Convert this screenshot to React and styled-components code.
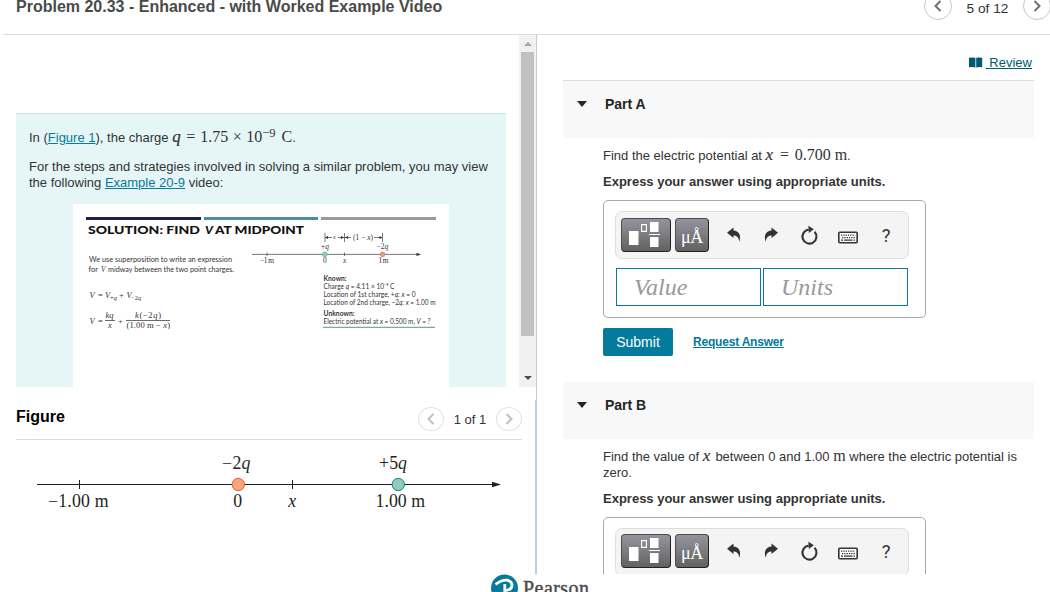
import React from 'react';
import styled, { createGlobalStyle } from 'styled-components';

const GlobalStyle = createGlobalStyle`
  * {
    box-sizing: border-box;
  }

  body {
    margin: 0;
    overflow: hidden;
    background: #fff;
    color: #252525;
    font-family: 'Liberation Sans', Arial, sans-serif;
    font-size: 13px;
    line-height: 16px;
  }

  p,
  h1,
  h2,
  h3 {
    margin: 0;
  }
`;

const StyledPage = styled.div`
  display: flex;
  flex-direction: column;
  width: 1050px;
  height: 592px;
  overflow: hidden;
`;
const StyledHeader = styled.header`
  display: flex;
  flex: none;
  justify-content: space-between;
  width: 1048px;
  height: 35px;
  margin-left: 3px;
  padding-left: 13px;
  border-bottom: 1px solid #dcdcdc;

  h1 {
    margin-top: -3px;
    color: #4a4a4a;
    font-size: 16px;
    line-height: 20px;
    white-space: nowrap;
  }
`;
const StyledPager = styled.div`
  display: flex;
  align-items: flex-start;
  margin-top: ${({ $top }) => $top || 0}px;

  span {
    width: ${({ $label }) => $label}px;
    padding-top: ${({ $drop }) => $drop}px;
    text-align: center;
    font-size: ${({ $size }) => $size}px;
    line-height: 16px;
    color: #333;
  }
`;
const StyledRound = styled.button`
  display: flex;
  flex: none;
  align-items: center;
  justify-content: center;
  width: ${({ $w }) => $w}px;
  height: ${({ $h }) => $h}px;
  padding: 0;
  border: 1px solid ${({ $faint }) => ($faint ? '#e2e2e2' : '#c7c7c7')};
  border-radius: 50%;
  background: #fff;
  color: ${({ $faint }) => ($faint ? '#c0c0c0' : '#6a7070')};
`;
const StyledMain = styled.main`
  display: flex;
  flex: none;
  height: 539px;
  overflow: hidden;
`;
const StyledLeft = styled.div`
  display: flex;
  flex-direction: column;
  flex: none;
  width: 537px;
`;
const StyledScrollPane = styled.div`
  display: flex;
  flex: none;
  height: 365px;
  border-right: 1px solid #b9cce0;
`;
const StyledIntroWrap = styled.div`
  flex: none;
  width: 519px;
  padding: 78px 13px 0 16px;
`;
const StyledIntro = styled.section`
  height: 274px;
  padding: 16px 0 0 13px;
  border-top: 1px solid #d5dede;
  background: #e6f6f7;
  white-space: nowrap;

  p {
    height: 16px;
    color: #333;
  }

  p + p {
    height: 32px;
    margin-top: 13px;
  }

  svg {
    display: block;
    margin: 13px 0 0 44px;
  }
`;
const StyledLink = styled.a`
  color: #047a9c;
  text-decoration: underline;
`;
const StyledScrollbar = styled.div`
  display: flex;
  flex-direction: column;
  align-items: center;
  width: 17px;
  height: 352px;
  padding-bottom: 7px;
  background: #f1f1f1;
`;
const StyledThumb = styled.div`
  flex: none;
  width: 13px;
  height: 284px;
  margin: 6px 0 auto;
  background: #c1c1c1;
`;
const StyledCaret = styled.i`
  width: 0;
  height: 0;
  margin-top: ${({ $up }) => ($up ? 7 : 0)}px;
  border: solid transparent;
  border-width: ${({ $up }) => ($up ? '0 4px 4px' : '4px 4px 0')};
  border-color: ${({ $up }) => ($up ? 'transparent transparent #a3a3a3' : '#505050 transparent transparent')};
`;
const StyledFigure = styled.section`
  flex: 1;
  padding-left: 16px;
  border-right: 2px solid #b9cce0;

  svg {
    display: block;
  }
`;
const StyledFigureHead = styled.div`
  display: flex;
  justify-content: space-between;
  width: 506px;
  height: 40px;
  border-bottom: 1px solid #dcdcdc;

  h2 {
    margin-top: 7px;
    color: #000;
    font-size: 16px;
    line-height: 20px;
  }
`;
const StyledRight = styled.div`
  flex: 1;
  padding-left: 26px;
`;
const StyledReview = styled.div`
  display: flex;
  align-items: center;
  justify-content: flex-end;
  gap: 3px;
  height: 45px;
  padding: 10px 18px 0 0;

  a {
    color: #005a70;
    white-space: pre;
  }
`;
const StyledPartHead = styled.h3`
  display: flex;
  gap: 18px;
  width: 471px;
  height: ${({ $first }) => ($first ? 58 : 57)}px;
  padding: 15px 0 0 14px;
  border-top: ${({ $first }) => ($first ? '1px solid #dcdcdc' : 'none')};
  background: #f8f8f8;
  color: #252525;
  font-size: 14px;

  i {
    width: 0;
    height: 0;
    margin-top: 5px;
    border: solid transparent;
    border-width: 6px 5px 0;
    border-top-color: #252525;
  }
`;
const StyledQuestion = styled.div`
  padding: 10px 0 0 40px;
  white-space: nowrap;

  p {
    color: #333;
  }

  p + p {
    margin-top: 10px;
    font-weight: bold;
  }
`;
const StyledAnswer = styled.div`
  width: 323px;
  height: 118px;
  margin-top: 10px;
  padding: 10px 0 0 11px;
  border: 1px solid #a9a9a9;
  border-radius: 5px;
`;
const StyledToolbar = styled.div`
  display: flex;
  align-items: flex-start;
  width: 294px;
  height: 48px;
  padding: ${({ $top }) => $top}px 0 0 5px;
  border: 1px solid #dedede;
  border-radius: 7px;
  background: #f4f4f4;
`;
const StyledKey = styled.button`
  flex: none;
  width: ${({ $wide }) => ($wide ? 50 : 34)}px;
  height: 34px;
  margin-right: 4px;
  padding: 0;
  border: 1px solid #4c4c50;
  border-right-color: #222;
  border-bottom-color: #222;
  border-radius: 4px;
  background: linear-gradient(#94949c, #626264);
  color: #fff;
  font-family: 'Liberation Serif', serif;
  font-size: 18px;
  line-height: 36px;
  letter-spacing: -0.4px;

  svg {
    display: block;
  }
`;
const StyledFields = styled.div`
  display: flex;
  gap: 2px;
  margin: 9px 0 0 1px;
`;
const StyledField = styled.div`
  width: 145px;
  height: 38px;
  padding-left: 17px;
  border: 1px solid #047a9c;
  color: #999;
  font: italic 24px/36px 'Liberation Serif', serif;
`;
const StyledActions = styled.div`
  display: flex;
  align-items: center;
  gap: 20px;
  height: 28px;
  margin: 10px 0 26px;

  a {
    font-size: 12px;
    font-weight: bold;
    letter-spacing: -0.2px;
  }
`;
const StyledSubmit = styled.button`
  width: 70px;
  height: 28px;
  padding: 0;
  border: 0;
  border-radius: 2px;
  background: #047a9c;
  color: #fff;
  font: 14px 'Liberation Sans', Arial, sans-serif;
`;
const StyledMath = styled.span`
  font-family: 'Liberation Serif', serif;
  font-size: 16px;
  line-height: 1px;

  i {
    display: inline-block;
    width: 9px;
    font-size: 17px;
    -webkit-text-stroke: 0.2px;
  }

  sup {
    margin-right: 2px;
    font-size: 12.5px;
    line-height: 0;
    vertical-align: 5px;
  }
`;
const StyledSign = styled.span`
  padding: 0 ${({ $gap }) => $gap}px;
`;
const StyledFooter = styled.footer`
  display: flex;
  height: 18px;
  padding-left: 490px;
  overflow: hidden;

  svg {
    flex: none;
  }
`;

const Chevron = ({ right }) => (
  <svg width="14" height="14" viewBox="0 0 14 14" fill="none" stroke="currentColor" strokeWidth="2">
    <path d={right ? 'M4.5 2L9.5 7L4.5 12' : 'M9.5 2L4.5 7L9.5 12'} />
  </svg>
);

const Slide = () => (
  <svg width="376" height="183" viewBox="73 204 376 183" fontFamily="Lato, sans-serif" fontSize="7.4" fill="#333">
    <rect x="73" y="204" width="376" height="183" fill="#fff" />
    <rect x="86" y="217" width="115" height="3" fill="#1b1f52" />
    <rect x="204" y="217" width="114" height="3" fill="#4a8ba5" />
    <rect x="321" y="217" width="115" height="3" fill="#9698a3" />
    <g fontSize="12" fontWeight="900" fill="#111" lengthAdjust="spacingAndGlyphs">
      <text x="88" y="233.5" textLength="112" lengthAdjust="spacingAndGlyphs">SOLUTION: FIND</text>
      <text x="205" y="233.5" fontStyle="italic" textLength="8" lengthAdjust="spacingAndGlyphs">V</text>
      <text x="215" y="233.5" textLength="89" lengthAdjust="spacingAndGlyphs">AT MIDPOINT</text>
    </g>
    <text x="89" y="262" textLength="143" lengthAdjust="spacingAndGlyphs">We use superposition to write an expression</text>
    <text x="88.5" y="271.5">for</text>
    <text x="101" y="271.5" fontFamily="Liberation Serif" fontStyle="italic">V</text>
    <text x="108" y="271.5" textLength="126" lengthAdjust="spacingAndGlyphs">midway between the two point charges.</text>
    <g fontFamily="Liberation Serif" fontSize="8.5">
      <text x="89.5" y="297.5" fontStyle="italic">V</text>
      <text x="98" y="297.5">=</text>
      <text x="105" y="297.5" fontStyle="italic">V</text>
      <text x="110" y="299.5" fontSize="6.5">+<tspan fontStyle="italic">q</tspan></text>
      <text x="119" y="297.5">+</text>
      <text x="126.5" y="297.5" fontStyle="italic">V</text>
      <text x="131" y="299.5" fontSize="6.5">−2<tspan fontStyle="italic">q</tspan></text>
      <text x="89.5" y="323.5" fontStyle="italic">V</text>
      <text x="98" y="323.5">=</text>
      <text x="105.5" y="317.5" fontStyle="italic">kq</text>
      <text x="108" y="328" fontStyle="italic">x</text>
      <text x="118" y="323.5">+</text>
      <text x="135" y="317.5" textLength="26"><tspan fontStyle="italic">k</tspan>(−2<tspan fontStyle="italic">q</tspan>)</text>
      <text x="126.5" y="328" textLength="43.5">(1.00 m − <tspan fontStyle="italic">x</tspan>)</text>
    </g>
    <path d="M105 320.5H115M126 320.5H170" stroke="#444" strokeWidth=".8" />
    <path
      d="M252 254.4H417M267 252.5V256M344.5 252.5V256M325 233V242M344.5 233V242M382.5 233V242M325 237.5H332M338 237.5H351M374 237.5H382"
      stroke="#555"
      strokeWidth=".8"
    />
    <path d="M421 254.4L416.5 252.7V256.1ZM325 237.5L328 236V239ZM344 237.5L341 236V239ZM345 237.5L348 236V239ZM382.5 237.5L379.5 236V239Z" />
    <circle cx="324.8" cy="254.4" r="2.4" fill="#8ed0bf" stroke="#4fa592" strokeWidth=".6" />
    <circle cx="382.6" cy="254.4" r="2.4" fill="#f19a7c" stroke="#d9694a" strokeWidth=".6" />
    <g fontFamily="Liberation Serif">
      <text x="333" y="239" fontSize="6" fontStyle="italic">x</text>
      <text x="353" y="239.5" textLength="20">(1 − <tspan fontStyle="italic">x</tspan>)</text>
      <text x="321" y="248.5">+<tspan fontStyle="italic">q</tspan></text>
      <text x="376.5" y="248.5">−2<tspan fontStyle="italic">q</tspan></text>
      <text x="260" y="262.5" textLength="14">−1 m</text>
      <text x="323" y="262.5">0</text>
      <text x="343" y="262.5" fontStyle="italic">x</text>
      <text x="378.5" y="262.5" textLength="10">1 m</text>
    </g>
    <g fontSize="6.6">
      <text x="323.5" y="281" fontWeight="bold" textLength="23" lengthAdjust="spacingAndGlyphs">Known:</text>
      <text x="323.5" y="289" textLength="71" lengthAdjust="spacingAndGlyphs">Charge <tspan fontStyle="italic">q</tspan> = 4.11 × 10⁻⁹ C</text>
      <text x="323.5" y="297" textLength="92" lengthAdjust="spacingAndGlyphs">Location of 1st charge, +<tspan fontStyle="italic">q</tspan>: <tspan fontStyle="italic">x</tspan> = 0</text>
      <text x="323.5" y="304.5" textLength="112" lengthAdjust="spacingAndGlyphs">Location of 2nd charge, −2<tspan fontStyle="italic">q</tspan>: <tspan fontStyle="italic">x</tspan> = 1.00 m</text>
      <text x="323.5" y="316" fontWeight="bold" textLength="31" lengthAdjust="spacingAndGlyphs">Unknown:</text>
      <text x="323.5" y="324" textLength="107" lengthAdjust="spacingAndGlyphs">Electric potential at <tspan fontStyle="italic">x</tspan> = 0.500 m, <tspan fontStyle="italic">V</tspan> = ?</text>
    </g>
    <path d="M323 327.3H435" stroke="#519c82" />
  </svg>
);

const NumberLine = () => (
  <svg width="506" height="80" viewBox="16 440 506 80" fontFamily="Liberation Serif" fontSize="17.8" fill="#231f20">
    <path d="M37 484.5H493M79.5 480V489M292.5 480V489" stroke="#231f20" />
    <path d="M501 484.5L492 481.8V487.2Z" />
    <circle cx="238.3" cy="484.5" r="6.2" fill="#f9a67c" stroke="#f15a29" />
    <circle cx="398.3" cy="484.5" r="6.2" fill="#96c7c1" stroke="#00917c" />
    <text x="222" y="469" textLength="28.5">−2<tspan fontStyle="italic">q</tspan></text>
    <text x="379" y="469" textLength="28">+5<tspan fontStyle="italic">q</tspan></text>
    <text x="48" y="507" textLength="60.5">−1.00 m</text>
    <text x="233.3" y="507">0</text>
    <text x="288.3" y="507" fontStyle="italic">x</text>
    <text x="375.5" y="507" textLength="49.5">1.00 m</text>
  </svg>
);

const ToolIcons = () => (
  <svg width="190" height="34" viewBox="713 218 190 34" fill="#333">
    <path d="M727 232.7L733.5 227.5V230.6C738.8 230.8 741.6 235.4 739.2 242C739 237.8 737.2 235.4 733.5 235.4V238Z" />
    <path d="M778 232.7L771.5 227.5V230.6C766.2 230.8 763.4 235.4 765.8 242C766 237.8 767.8 235.4 771.5 235.4V238Z" />
    <path d="M814.6 231.8A7 7 0 1 1 808.6 229.6" fill="none" stroke="#333" strokeWidth="2.1" />
    <path d="M808.4 225.8L813.8 229.2L808.8 233Z" />
    <rect x="838.8" y="232.3" width="18.4" height="10.4" rx="1" fill="#fff" stroke="#333" strokeWidth="1.6" />
    <path d="M841 235.2H855M842 237.6H855" stroke="#333" strokeWidth="1.2" strokeDasharray="1.3 1" />
    <path d="M841 240.2H843M844 240.2H852.5M853.5 240.2H855" stroke="#333" strokeWidth="1.2" />
    <text x="881.8" y="241.6" fontSize="18.5" fontFamily="Roboto">?</text>
  </svg>
);

const AnswerBox = ({ top }) => (
  <StyledAnswer>
    <StyledToolbar $top={top}>
      <StyledKey $wide>
        <svg width="48" height="32" viewBox="0 0 48 32" fill="#fff">
          <path d="M7 12H16.5V26H7ZM28 3H36.5V13H28ZM27 15H38V16H27ZM28 18H36.5V28H28Z" />
          <path d="M19.6 5.6H24.4V12.4H19.6Z" fill="none" stroke="#fff" strokeWidth="1.1" />
        </svg>
      </StyledKey>
      <StyledKey>μÅ</StyledKey>
      <ToolIcons />
    </StyledToolbar>
    <StyledFields>
      <StyledField>Value</StyledField>
      <StyledField>Units</StyledField>
    </StyledFields>
  </StyledAnswer>
);

const App = () => (
  <StyledPage>
    <GlobalStyle />
    <StyledHeader>
      <h1>Problem 20.33 - Enhanced - with Worked Example Video</h1>
      <StyledPager $top={-8} $label={71} $drop={9} $size={13.7}>
        <StyledRound $w={28} $h={28}>
          <Chevron />
        </StyledRound>
        <span>5 of 12</span>
        <StyledRound $w={28} $h={28}>
          <Chevron right />
        </StyledRound>
      </StyledPager>
    </StyledHeader>

    <StyledMain>
      <StyledLeft>
        <StyledScrollPane>
          <StyledIntroWrap>
            <StyledIntro>
              <p>
                In (<StyledLink>Figure 1</StyledLink>), the charge{' '}
                <StyledMath>
                  <i>q</i>
                  <StyledSign $gap={5}>=</StyledSign>1.75
                  <StyledSign $gap={4.5}>×</StyledSign>10<sup>−9</sup> C
                </StyledMath>
                .
              </p>
              <p>
                For the steps and strategies involved in solving a similar problem, you may view
                <br />
                the following <StyledLink>Example 20-9</StyledLink> video:
              </p>
              <Slide />
            </StyledIntro>
          </StyledIntroWrap>
          <StyledScrollbar>
            <StyledCaret $up />
            <StyledThumb />
            <StyledCaret />
          </StyledScrollbar>
        </StyledScrollPane>

        <StyledFigure>
          <StyledFigureHead>
            <h2>Figure</h2>
            <StyledPager $top={7} $label={52} $drop={5} $size={13}>
              <StyledRound $w={26} $h={24} $faint>
                <Chevron />
              </StyledRound>
              <span>1 of 1</span>
              <StyledRound $w={26} $h={24} $faint>
                <Chevron right />
              </StyledRound>
            </StyledPager>
          </StyledFigureHead>
          <NumberLine />
        </StyledFigure>
      </StyledLeft>

      <StyledRight>
        <StyledReview>
          <svg width="14" height="11" viewBox="0 0 14 11" fill="#005a70">
            <path d="M0 .8Q3.5 0 6.4 .8V10.5Q3.5 9.6 0 10.3ZM7.2 .8Q10 0 13.2 .8V10.3Q10 9.6 7.2 10.5Z" />
          </svg>
          <StyledLink> Review</StyledLink>
        </StyledReview>

        <StyledPartHead $first>
          <i />
          Part A
        </StyledPartHead>
        <StyledQuestion>
          <p>
            Find the electric potential at{' '}
            <StyledMath>
              <i>x</i>
              <StyledSign $gap={5.5}>=</StyledSign>0.700 m
            </StyledMath>
            .
          </p>
          <p>Express your answer using appropriate units.</p>
          <AnswerBox top={6} />
          <StyledActions>
            <StyledSubmit>Submit</StyledSubmit>
            <StyledLink>Request Answer</StyledLink>
          </StyledActions>
        </StyledQuestion>

        <StyledPartHead>
          <i />
          Part B
        </StyledPartHead>
        <StyledQuestion>
          <p>
            Find the value of{' '}
            <StyledMath>
              <i>x</i>
            </StyledMath>{' '}
            between 0 and 1.00 <StyledMath>m</StyledMath> where the electric potential is
            <br />
            zero.
          </p>
          <p>Express your answer using appropriate units.</p>
          <AnswerBox top={5} />
        </StyledQuestion>
      </StyledRight>
    </StyledMain>

    <StyledFooter>
      <svg width="110" height="18" viewBox="490 574 110 18">
        <circle cx="504.5" cy="588" r="13.5" fill="#047a9c" />
        <path
          d="M495.5 584.5Q501.5 579.6 507 580.2Q512.2 581.2 512 585.4Q511.5 590.5 504.5 590.6M504.8 584V593"
          fill="none"
          stroke="#fff"
          strokeWidth="2.8"
        />
        <text x="523" y="595" fontFamily="Liberation Serif" fontSize="20" fill="#4a4a4a" stroke="#4a4a4a" strokeWidth=".4" textLength="66">
          Pearson
        </text>
      </svg>
    </StyledFooter>
  </StyledPage>
);

export default App;
